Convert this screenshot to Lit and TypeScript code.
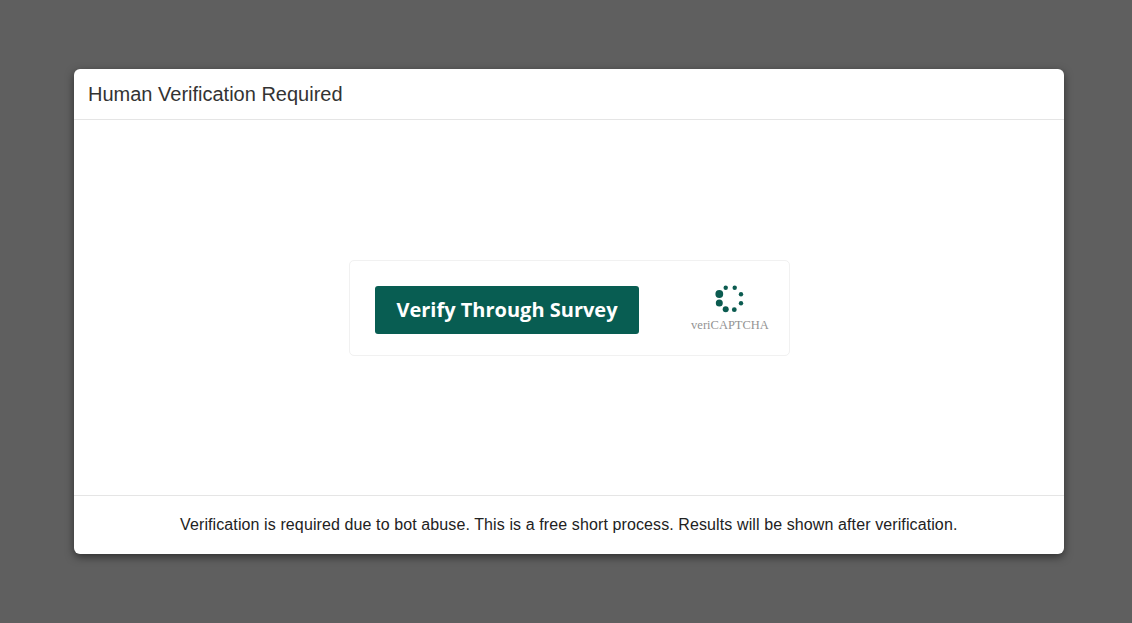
import { LitElement, html, css, svg } from "lit";
import { customElement } from "lit/decorators.js";

const dots: [number, number, number][] = [
  [719.3, 294, 3.9], [719.3, 303, 3.5], [725.7, 309.3, 3], [734.3, 309.7, 2.4],
  [741, 303.3, 2.2], [741, 294.3, 2.2], [734.7, 287.7, 2.2], [725.7, 287.7, 2.2],
];

@customElement("app-root")
export class AppRoot extends LitElement {
  static styles = css`
    :host { display: block; height: 623px; background: #5f5f5f; overflow: hidden; font-family: "Liberation Sans", Arial, sans-serif; }
    .page { padding: 69px 68px 0 74px; }
    .modal { box-sizing: border-box; width: 989.5px; height: 484.5px; background: #fff; border-radius: 6px;
      box-shadow: 0 3px 9px rgba(0,0,0,.5); display: flex; flex-direction: column; }
    .head { box-sizing: border-box; height: 51px; padding: 0 14px; display: flex; align-items: center; border-bottom: 1px solid #e5e5e5; }
    .title { font-size: 20px; line-height: 49px; color: #333; font-weight: 400; margin: 0; }
    .body { flex: 1; display: flex; align-items: center; padding-left: 275px; }
    .card { box-sizing: border-box; width: 441px; height: 96px; border: 1px solid #f1f1f1; border-radius: 5px; display: flex; align-items: center;
      padding: 4px 0 0 25px; }
    .btn { box-sizing: border-box; width: 264px; height: 48px; background: #085d52; border: 0; border-radius: 3px; color: #fff; padding: 0;
      font: 700 20px "Open Sans", sans-serif; display: flex; align-items: center; justify-content: center; }
    .brand { width: 80px; margin: -4px 0 0 51px; display: flex; flex-direction: column; align-items: center; }
    .spin { width: 34px; height: 30px; display: block; }
    .name { font: 12.5px/14px "Liberation Serif", serif; color: #939393; margin-top: 4px; white-space: nowrap; }
    .foot { box-sizing: border-box; height: 58.5px; border-top: 1px solid #e5e5e5; display: flex; align-items: center; justify-content: center; font-size: 16px; letter-spacing: .105px; color: #222; }
  `;
  render() {
    return html`<div class="page"><div class="modal">
      <div class="head"><h4 class="title">Human Verification Required</h4></div>
      <div class="body"><div class="card">
        <button class="btn">Verify Through Survey</button>
        <div class="brand">
          <svg class="spin" viewBox="713 284 34 30">
            ${dots.map(([x, y, r]) => svg`<circle cx=${x} cy=${y} r=${r} fill="#0b5b50"></circle>`)}
          </svg>
          <div class="name">veriCAPTCHA</div>
        </div>
      </div></div>
      <div class="foot">Verification is required due to bot abuse. This is a free short process. Results will be shown after verification.</div>
    </div></div>`;
  }
}
